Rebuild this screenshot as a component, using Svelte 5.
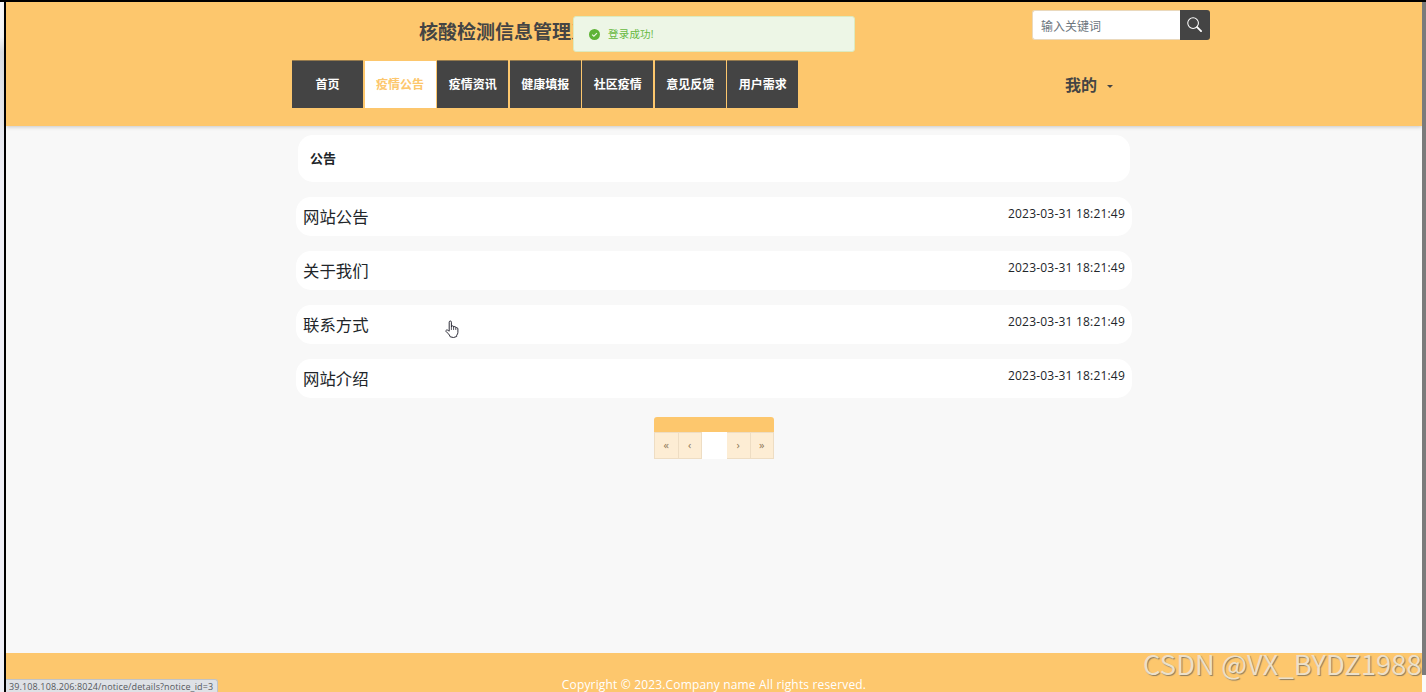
<script lang="ts">
  interface Notice {
    title: string;
    time: string;
  }

  const navItems = ['首页', '疫情公告', '疫情资讯', '健康填报', '社区疫情', '意见反馈', '用户需求'];

  const notices: Notice[] = [
    { title: '网站公告', time: '2023-03-31 18:21:49' },
    { title: '关于我们', time: '2023-03-31 18:21:49' },
    { title: '联系方式', time: '2023-03-31 18:21:49' },
    { title: '网站介绍', time: '2023-03-31 18:21:49' }
  ];

  let active = $state(1);
  let keyword = $state('');
</script>

<div class="screen">
  <div class="edge"></div>
  <div class="page">
    <header>
      <div class="top">
        <h1>核酸检测信息管理系统</h1>
        <form class="search" onsubmit={(e) => e.preventDefault()}>
          <input type="text" placeholder="输入关键词" bind:value={keyword} />
          <button type="submit" aria-label="搜索">
            <svg width="15" height="15" viewBox="0 0 16 16" fill="none" stroke="#fff">
              <circle cx="6.5" cy="6.5" r="5.7" stroke-width="1.1" />
              <path d="M10.8 10.8 L15 15" stroke-width="2" stroke-linecap="round" />
            </svg>
          </button>
        </form>
      </div>
      <div class="bottom">
        <nav>
          {#each navItems as item, i}
            <button class="nav-item" class:active={active === i} onclick={() => (active = i)}>{item}</button>
          {/each}
        </nav>
        <div class="mine">我的<span class="caret"></span></div>
      </div>
    </header>

    <main>
      <h2>公告</h2>
      <ul class="list">
        {#each notices as notice}
          <li>
            <span class="title">{notice.title}</span>
            <span class="time">{notice.time}</span>
          </li>
        {/each}
      </ul>
      <div class="pager">
        <span>«</span>
        <span>‹</span>
        <span class="current"></span>
        <span>›</span>
        <span>»</span>
      </div>
    </main>

    <footer>Copyright © 2023.Company name All rights reserved.</footer>
  </div>
  <div class="scrollbar"><div class="thumb"></div></div>

  <div class="toast">
    <svg width="11" height="11" viewBox="0 0 12 12">
      <circle cx="6" cy="6" r="6" fill="#5fb336" />
      <path d="M3.4 6.1 L5.3 7.9 L8.7 4.5" fill="none" stroke="#edf6e6" stroke-width="1.2" />
    </svg>
    <span>登录成功!</span>
  </div>
  <div class="status">39.108.108.206:8024/notice/details?notice_id=3</div>
  <div class="watermark">CSDN @VX_BYDZ1988</div>
  <svg class="cursor" width="14" height="19" viewBox="0 0 14 19">
    <path
      d="M4.2 11.2 V2.2 Q4.2 1 5.3 1 Q6.4 1 6.4 2.2 V7 Q6.5 5.8 7.5 5.8 Q8.6 5.8 8.6 7 V7.5 Q8.8 6.4 9.8 6.5 Q10.8 6.6 10.8 7.7 V8.2 Q11.1 7.4 12 7.6 Q12.9 7.9 12.9 9 V12.3 Q12.8 14.1 11.7 15.2 V16.5 Q8.6 18.4 5.2 16.8 Q4.8 15 2.8 13.2 L1 11.4 Q.5 10.5 1.4 10.1 Q2.3 9.7 3.3 10.5 Z"
      fill="#fff"
      stroke="#2d2d38"
    />
    <path d="M6.4 7 V10 M8.6 7.5 V10 M10.8 8.2 V10" fill="none" stroke="#2d2d38" stroke-width=".8" />
  </svg>
</div>

<style>
  :global(body) {
    margin: 0;
    overflow: hidden;
  }

  .screen {
    position: relative;
    display: flex;
    box-sizing: border-box;
    width: 1426px;
    height: 692px;
    border-top: 2px solid #000;
    overflow: hidden;
    background: #f8f8f8;
    font-family: 'Open Sans', 'Noto Sans CJK SC', sans-serif;
    color: #212529;
  }

  .edge {
    box-sizing: border-box;
    width: 6px;
    border-right: 2px solid #000;
    background: linear-gradient(#f8f8f9 0, #f4f5f6 35px, #d9dce1 50px, #e2e4e9 90px, #f0f0f7 180px);
  }

  .page {
    display: flex;
    flex-direction: column;
    width: 1416px;
  }

  header {
    box-sizing: border-box;
    height: 124px;
    padding: 8px 212px 0 286px;
    background: #fdc76d;
    box-shadow: 0 1px 4px rgba(0, 0, 0, 0.2);
    flex-shrink: 0;
  }

  .top {
    display: flex;
    justify-content: space-between;
    height: 50px;
    padding-left: 127px;
  }

  h1 {
    margin: 0;
    font-size: 19px;
    line-height: 45px;
    color: #444;
  }

  .search {
    display: flex;
    width: 178px;
    height: 30px;
  }

  input {
    box-sizing: border-box;
    width: 148px;
    padding: 2px 8px 0;
    border: 1px solid #ead9bd;
    border-right: none;
    border-radius: 3px 0 0 3px;
    font-family: inherit;
    font-size: 12px;
    outline: none;
  }

  input::placeholder {
    color: #6c757d;
  }

  .search button {
    display: flex;
    align-items: center;
    justify-content: center;
    width: 30px;
    padding: 0 1px 1px 0;
    border: none;
    border-radius: 0 3px 3px 0;
    background: #444;
  }

  .bottom {
    display: flex;
    justify-content: space-between;
  }

  nav {
    display: flex;
    gap: 1.4px;
  }

  .nav-item {
    box-sizing: border-box;
    width: 71.15px;
    height: 48px;
    padding: 0 0 2px;
    border: none;
    border-top: 1px solid #94794c;
    background: #444;
    color: #fff;
    font-family: inherit;
    font-size: 12px;
    font-weight: 700;
    cursor: pointer;
  }

  .nav-item.active {
    border-top-color: #fdc76d;
    background: #fff;
    color: #fdc76d;
  }

  .mine {
    display: flex;
    align-items: center;
    gap: 10px;
    height: 48px;
    margin-right: 97px;
    color: #444;
    font-size: 16px;
    font-weight: 700;
  }

  .caret {
    margin-top: 4px;
    border: 3px solid transparent;
    border-top-color: #444;
    border-bottom: none;
  }

  main {
    flex: 1;
    width: 836px;
    margin: 0 auto;
    padding-top: 9px;
  }

  h2 {
    margin: 0 2px 15px;
    padding-left: 12px;
    border-radius: 15px;
    background: #fff;
    font-size: 13px;
    line-height: 47px;
  }

  .list {
    display: flex;
    flex-direction: column;
    gap: 15px;
    margin: 0;
    padding: 0;
    list-style: none;
  }

  li {
    display: flex;
    justify-content: space-between;
    height: 39px;
    padding: 0 7px;
    border-radius: 15px;
    background: #fff;
  }

  .title {
    font-size: 16.4px;
    line-height: 39px;
  }

  .time {
    font-size: 12px;
    line-height: 34px;
    letter-spacing: 0.2px;
  }

  .pager {
    display: flex;
    box-sizing: border-box;
    width: 120px;
    height: 42px;
    margin: 19px auto 0;
    padding-top: 15px;
    border-radius: 3px 3px 0 0;
    background: #fdc76d;
  }

  .pager span {
    flex: 1;
    box-sizing: border-box;
    border: 1px solid #eeddc3;
    border-left-width: 0;
    background: #fdedd4;
    color: #8d7757;
    font-size: 11px;
    line-height: 24px;
    text-align: center;
  }

  .pager span:first-child {
    border-left-width: 1px;
  }

  .pager .current {
    flex: 0 0 25px;
    border-color: #fff;
    background: #fff;
  }

  footer {
    height: 39px;
    background: #fdc76d;
    color: #fff;
    font-size: 12px;
    line-height: 63px;
    letter-spacing: 0.16px;
    text-align: center;
  }

  .scrollbar {
    width: 4px;
    background: #fafafa;
  }

  .thumb {
    height: 673px;
    background: #7b7b7b;
  }

  .toast {
    position: absolute;
    top: 14px;
    left: 573px;
    display: flex;
    align-items: center;
    gap: 8px;
    box-sizing: border-box;
    width: 282px;
    height: 36px;
    padding-left: 15px;
    border: 1px solid #dcebc0;
    border-radius: 3px;
    background: #edf6e6;
    color: #67b93f;
    font-size: 10.5px;
  }

  .toast span {
    margin-top: -2px;
    letter-spacing: 0.2px;
  }

  .status {
    position: absolute;
    top: 677px;
    left: 6px;
    box-sizing: border-box;
    width: 212px;
    height: 15px;
    padding-left: 3px;
    border: 1px solid #c1c3c5;
    border-left: none;
    border-bottom: none;
    border-radius: 0 3px 0 0;
    background: #dee1e6;
    color: #55585c;
    font-size: 9px;
    line-height: 14px;
    letter-spacing: 0.13px;
    white-space: nowrap;
  }

  .watermark {
    position: absolute;
    top: 644px;
    left: 1143px;
    color: #ece0ca;
    font-family: 'Noto Sans CJK SC', sans-serif;
    font-size: 27.5px;
    font-weight: 350;
    line-height: 34px;
    letter-spacing: 0.12px;
    text-shadow: 1px 1px 1px #8b7b60;
    white-space: nowrap;
  }

  .cursor {
    position: absolute;
    top: 318px;
    left: 445px;
  }
</style>
